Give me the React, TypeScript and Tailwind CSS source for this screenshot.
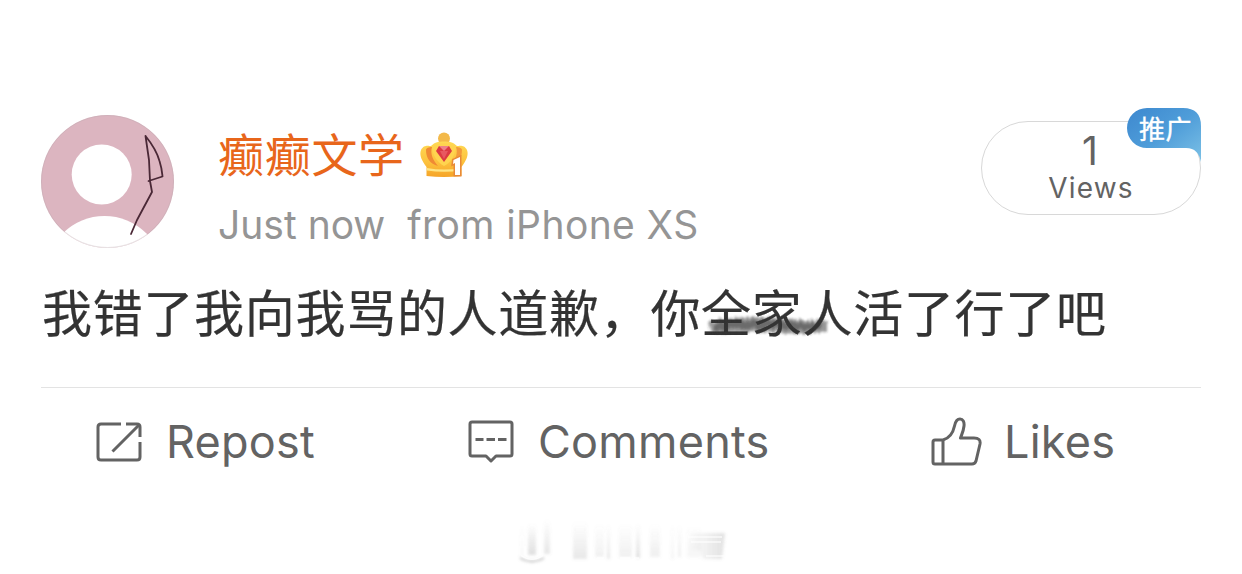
import type { ReactNode } from "react";

const CJK = "font-['Inter','Noto_Sans_CJK_SC',sans-serif]";

function Avatar() {
  return (
    <svg width="133" height="133" viewBox="0 0 133 133" className="shrink-0">
      <defs>
        <clipPath id="avatar-clip">
          <circle cx="66.5" cy="66.5" r="66.5" />
        </clipPath>
      </defs>
      <g clipPath="url(#avatar-clip)">
        <rect width="133" height="133" fill="#dcb5c0" />
        <circle cx="60.7" cy="59.5" r="30" fill="#fff" />
        <circle cx="63.5" cy="160" r="59" fill="#fff" />
      </g>
      <circle cx="66.5" cy="66.5" r="66" fill="none" stroke="#b9a9ae" strokeOpacity="0.35" />
      <path
        d="M90 119L96 105L111 77L109 66L108 45L104.5 21C111 29 116 37 118.500 46C121 54 121 57 121.500 61.500L107.500 66"
        fill="none"
        stroke="#4a2836"
        strokeWidth="1.8"
        strokeLinejoin="round"
        strokeLinecap="round"
      />
    </svg>
  );
}

function CrownIcon() {
  return (
    <svg width="50" height="48" viewBox="0 0 50 48" className="shrink-0">
      <defs>
        <linearGradient id="gold" x1="0" y1="0" x2="0" y2="1">
          <stop offset="0" stopColor="#ffda55" />
          <stop offset="0.6" stopColor="#fcc03c" />
          <stop offset="1" stopColor="#f5a428" />
        </linearGradient>
      </defs>
      <circle cx="25" cy="7.500" r="6" fill="#f3b94a" />
      <path
        d="M7.500 45L7.500 36C3 30 0 24 2 19C5 13 10 15 12 15C16 11 20 10.500 25 10.500C30 10.500 34 11 38 15C40 15 45 13 48 19C50 24 47 30 42.500 36V45Q25 47 7.500 45Z"
        fill="url(#gold)"
      />
      <path d="M7 19C7 27 11 33 19 35C14 29 11 23 13 16C10 16 7 17 7 19Z" fill="#f08a34" />
      <path d="M43 19C43 27 39 32 32 34C37 28 39 22 37 16C40 16 43 17 43 19Z" fill="#f39a3c" />
      <path d="M13 16C18 11 32 11 37 16C35 27 31 32 25 35C18 31 14 25 13 16Z" fill="#ffd44f" />
      <path d="M8 37Q25 40 42 37V39.500Q25 42 8 39.500Z" fill="#ffe584" />
      <path d="M20 15H30L33 20L25 31L17 20Z" fill="#dc3a42" />
      <path d="M20 15L25 20L30 15Z" fill="#f08088" />
      <path d="M21 20H29L25 28Z" fill="#e85860" />
      <path
        d="M34.500 29L41 26V44H36V32L34 33Z"
        fill="#fff"
        stroke="#e88a38"
        strokeWidth="3"
        paintOrder="stroke"
      />
    </svg>
  );
}

function RepostIcon() {
  return (
    <svg width="46" height="40" viewBox="0 0 46 40" fill="none" stroke="#636363" strokeWidth="3">
      <path d="M25 2H5Q2 2 2 5V35Q2 38 5 38H41Q44 38 44 35V20" />
      <path d="M30 2H41Q44 2 44 5V15" />
      <path d="M16.500 29.500L43 3" />
    </svg>
  );
}

function CommentIcon() {
  return (
    <svg width="46" height="43" viewBox="0 0 46 43" fill="none" stroke="#636363" strokeWidth="3" strokeLinejoin="round">
      <path d="M4 2H42Q44 2 44 4V34Q44 36 42 36H28L23 41L18 36H4Q2 36 2 34V4Q2 2 4 2Z" />
      <path d="M7.500 19.500H15.500M18.500 19.500H27M30 19.500H38.500" />
    </svg>
  );
}

function LikeIcon() {
  return (
    <svg width="51" height="49" viewBox="0 0 51 49" fill="none" stroke="#636363" strokeWidth="3" strokeLinejoin="round">
      <path d="M12 23C19 21 22 16 23.500 9C24.500 4 26 2 29 2C32 2 33.500 5 33 9C32.500 14 31 17 29.500 21H43Q50 21 49 27L45 44Q44 47 41 47H4Q2 47 2 45V25Q2 23 4 23H12V47" />
    </svg>
  );
}

function ViewsPill() {
  return (
    <div className="relative mt-[13px] flex h-[94px] w-[220px] flex-col items-center rounded-full border border-[#d8d8d8] text-[#636363]">
      <span className="mt-[8px] h-[41px] pr-[2px] text-[39px] leading-[41px]">1</span>
      <span className="h-[34px] text-[28px] leading-[34px] tracking-[1.2px]">Views</span>
      <div className="absolute -top-[14px] -right-px h-[54px] w-[74px]">
        <svg width="74" height="54" viewBox="0 0 74 54" className="absolute inset-0">
          <defs>
            <linearGradient id="promo" x1="0" y1="0" x2="1" y2="1">
              <stop offset="0" stopColor="#3d88cf" />
              <stop offset="0.5" stopColor="#4f9dd9" />
              <stop offset="1" stopColor="#7cc1e6" />
            </linearGradient>
          </defs>
          <path d="M20 0H56Q74 0 74 18V54C72 45 68 40 59 40H20A20 20 0 0 1 20 0Z" fill="url(#promo)" />
        </svg>
        <span className="relative block pt-[8px] pl-[12px] text-[26px] leading-[28px] tracking-[0.5px] whitespace-nowrap text-white [-webkit-text-stroke:0.4px_#fff]">
          推广
        </span>
      </div>
    </div>
  );
}

function Action({ icon, label, className }: { icon: ReactNode; label: string; className: string }) {
  return (
    <div className={`flex items-center ${className}`}>
      {icon}
      <span className="pt-px text-[45px] leading-[54px] tracking-[0.25px]">{label}</span>
    </div>
  );
}

// x, width, top, height, opacity of each faded column
const streaks = [
  [20, 4, 14, 32, 0.04],
  [28, 8, 14, 31, 0.24],
  [44, 6, 10, 34, 0.18],
  [73, 14, 12, 37, 0.17],
  [95, 9, 14, 33, 0.1],
  [107, 3, 14, 35, 0.17],
  [119, 13, 14, 33, 0.11],
  [136, 4, 14, 34, 0.22],
  [150, 10, 14, 33, 0.12],
  [171, 3, 14, 35, 0.08],
  [178, 3, 14, 33, 0.12],
  [187, 14, 16, 31, 0.07],
];

function FadedMark() {
  return (
    <svg width="240" height="64" viewBox="0 0 240 64">
      <defs>
        <linearGradient id="fade" x1="0" y1="0" x2="0" y2="1">
          <stop offset="0" stopColor="#777" stopOpacity="0" />
          <stop offset="1" stopColor="#777" />
        </linearGradient>
        <linearGradient id="fade-across" x1="0" y1="0" x2="1" y2="0">
          <stop offset="0" stopColor="#888" stopOpacity="0.03" />
          <stop offset="1" stopColor="#777" stopOpacity="0.22" />
        </linearGradient>
        <filter id="soft">
          <feGaussianBlur stdDeviation="1.5" />
        </filter>
      </defs>
      <g filter="url(#soft)">
        {streaks.map(([x, w, top, h, o]) => (
          <rect key={x} x={x} y={top} width={w} height={h} fill="url(#fade)" opacity={o} />
        ))}
        <path d="M190 23H225L222 49H203L200 40H190Z" fill="url(#fade-across)" />
        <path d="M20 48Q32 55 44 48" fill="none" stroke="#888" strokeWidth="2" opacity="0.5" />
      </g>
      <path
        d="M21 45.500Q32 53 43 45.500M97 48H104M120 48H130M134 48H139M188 27H222M191 32H221M206 46H224"
        fill="none"
        stroke="#fff"
        strokeWidth="1.5"
        strokeOpacity="0.75"
      />
    </svg>
  );
}

export default function App() {
  return (
    <div className={`h-[574px] w-[1242px] overflow-hidden bg-white px-[41px] pt-[108px] ${CJK}`}>
      <div className="flex h-[140px] items-start">
        <div className="pt-[7px]">
          <Avatar />
        </div>
        <div className="ml-[44px] flex-1">
          <div className="flex h-[76px] items-center pt-[17px]">
            <span className="text-[46px] leading-[60px] tracking-[0.7px] text-[#e8661b]">癫癫文学</span>
            <span className="ml-[14px]">
              <CrownIcon />
            </span>
          </div>
          <div className="mt-[17px] flex gap-[22px] text-[39px] leading-[48px] whitespace-nowrap text-[#959595]">
            <span>Just now</span>
            <span className="tracking-[0.4px]">from iPhone XS</span>
          </div>
        </div>
        <ViewsPill />
      </div>

      <p className="relative mt-[31px] h-[70px] pl-px text-[50px] leading-[70px] tracking-[0.7px] whitespace-nowrap text-[#333] [-webkit-text-stroke:0.2px_#333]">
        我错了我向我骂的人道歉，你全家人活了行了吧
        <svg width="130" height="28" viewBox="-2 -2 130 28" className="absolute top-[33px] left-[662px]">
          <defs>
            <filter id="rough" x="-5%" y="-30%" width="110%" height="160%">
              <feTurbulence type="fractalNoise" baseFrequency="0.5 0.04" numOctaves="2" />
              <feDisplacementMap in="SourceGraphic" scale="8" xChannelSelector="R" yChannelSelector="G" />
              <feGaussianBlur stdDeviation="0.8" />
            </filter>
          </defs>
          <g fill="#333" filter="url(#rough)">
            <path
              d="M4 7L22 5L40 3L60 3L80 5L95 6L124 7L122 18L105 20L85 20L60 18L40 18L25 20L5 18Z"
              fillOpacity="0.5"
            />
            <path d="M8 9L30 7L60 6L85 8L117 10L114 16L88 16L60 14L30 15L9 16Z" fillOpacity="0.45" />
          </g>
        </svg>
      </p>

      <div className="mt-[38px] flex h-[110px] items-start border-t border-[#e3e3e3] pt-[26px] text-[#636363]">
        <Action icon={<RepostIcon />} label="Repost" className="ml-[55px] w-[372px] gap-[24px]" />
        <Action icon={<CommentIcon />} label="Comments" className="w-[463px] gap-[24px]" />
        <Action icon={<LikeIcon />} label="Likes" className="gap-[22px]" />
      </div>

      <div className="mt-[13px] ml-[459px]">
        <FadedMark />
      </div>
    </div>
  );
}
